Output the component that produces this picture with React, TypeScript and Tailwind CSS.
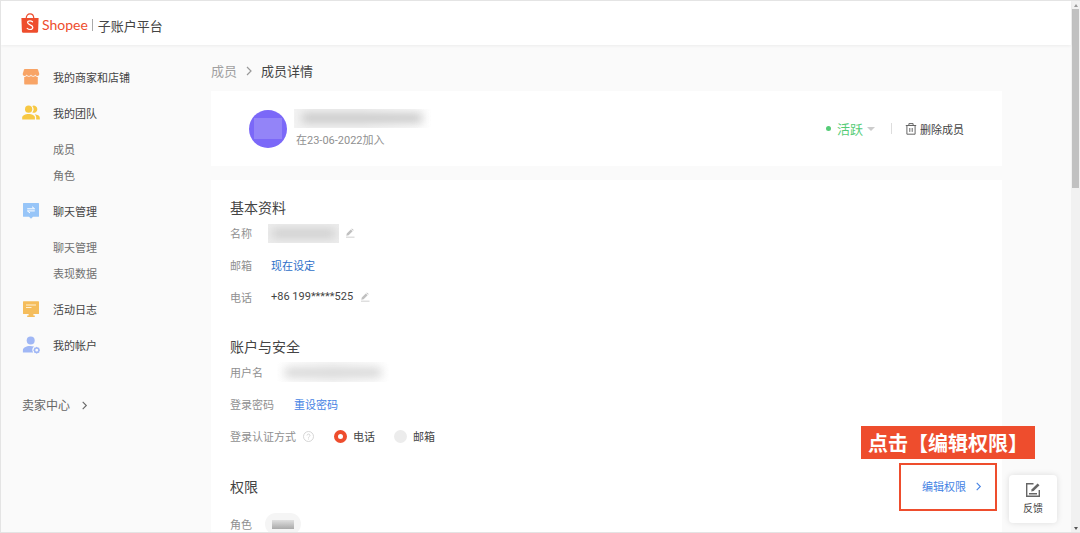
import type { ReactNode } from 'react';

function ShopeeBag() {
  return (
    <svg className="h-5 w-[18px]" viewBox="0 0 18 20" fill="none" aria-hidden="true">
      <path d="M5.2 5.6C5.2 2.6 6.8.9 9 .9s3.8 1.700 3.8 4.700" stroke="#ee4d2d" strokeWidth="1.200" />
      <path d="M.4 5h17.2l-.5 13.2c-.1 1-.8 1.600-1.700 1.600H2.600c-.9 0-1.600-.6-1.700-1.600L.4 5Z" fill="#ee4d2d" />
      <path
        d="M11.500 8.800c-.7-.6-1.600-1-2.500-1-1.400 0-2.400.7-2.400 1.800 0 2.600 5.200 1.900 5.200 4.700 0 1.300-1.200 2.200-2.700 2.200-1.200 0-2.200-.5-2.900-1.200"
        stroke="#fff"
        strokeWidth="1.200"
        strokeLinecap="round"
      />
    </svg>
  );
}

function StoreIcon() {
  return (
    <svg className="size-[18px]" viewBox="0 0 18 18" fill="#f8a466" aria-hidden="true">
      <path d="M2.800 1h12.400c.4 0 .7.200.8.600l1.300 4.500c0 1.200-.9 1.900-2 1.900s-2.100-.8-2.100-1.700c0 .9-1 1.700-2.100 1.700S9 7.200 9 6.300C9 7.200 8 8 6.900 8s-2.100-.8-2.100-1.700C4.800 7.200 3.800 8 2.700 8S.7 7.300.7 6.100L2 1.600c.1-.4.400-.6.800-.6Z" />
      <path d="M2.200 8.900c1.100.1 2-.2 2.600-.8 1.200 1 2.900 1 4.200 0 1.300 1 3 1 4.200 0 .6.600 1.500.9 2.600.8v6.700c0 .6-.4 1-1 1H3.200c-.6 0-1-.4-1-1V8.900Z" />
    </svg>
  );
}

function TeamIcon() {
  return (
    <svg className="size-[18px]" viewBox="0 0 18 18" fill="#f7c843" aria-hidden="true">
      <circle cx="6.600" cy="5.200" r="3.600" />
      <path d="M.2 15.600v-2c0-2.500 3.300-3.700 6.400-3.700s6.300 1.200 6.300 3.700v2H.2Z" />
      <path d="M10.300 1.900a3.600 3.600 0 1 1 0 6.600 5.200 5.200 0 0 0 0-6.600ZM12.700 10.200c2.600.3 5.100 1.400 5.100 3.500v1.900h-3.600v-2c0-1.400-.6-2.500-1.500-3.400Z" />
    </svg>
  );
}

function ChatIcon() {
  return (
    <svg className="size-[18px]" viewBox="0 0 18 18" aria-hidden="true">
      <path d="M1.600 1h14.800c.4 0 .6.2.6.6v12.600c0 .4-.2.600-.6.600H11l-2 1.900-2-1.900H1.600c-.4 0-.6-.2-.6-.6V1.600c0-.4.2-.6.6-.6Z" fill="#97c5f8" />
      <path d="M5.200 6.800h7.400L10 4.700M12.800 8.900H5.400L8 11" fill="none" stroke="#fff" strokeWidth="1" />
    </svg>
  );
}

function LogIcon() {
  return (
    <svg className="size-[18px]" viewBox="0 0 18 18" aria-hidden="true">
      <path d="M1.600 1.200h14.800c.4 0 .6.200.6.600v11.600c0 .4-.2.600-.6.600h-5v1.600h1.400V17H5.200v-1.400h1.400V14h-5c-.4 0-.6-.2-.6-.6V1.800c0-.4.200-.6.600-.6Z" fill="#f5bd5c" />
      <path d="M4 5h10M4 7.500h5.500" stroke="#fff1d5" strokeWidth="1" />
    </svg>
  );
}

function AccountIcon() {
  return (
    <svg className="size-[18px]" viewBox="0 0 18 18" fill="#a0b7f5" aria-hidden="true">
      <circle cx="8.700" cy="4.600" r="4" />
      <path d="M.9 16.500v-2.200c0-2.700 3.300-4.300 7.100-4.300 1.600 0 3 .2 4.100.6a4.500 4.500 0 0 0-1 5.900H.9Z" />
      <path
        fillRule="evenodd"
        d="m14.700 10.700 1.100.9 1.400.1.200 1.400.8 1.100-.8 1.100-.2 1.400-1.400.2-1.100.8-1.100-.8-1.400-.2-.2-1.400-.8-1.100.8-1.100.2-1.400 1.400-.1 1.100-.9Zm0 2.100a1.400 1.400 0 1 0 0 2.800 1.400 1.400 0 0 0 0-2.800Z"
      />
    </svg>
  );
}

function Chevron({ className }: { className: string }) {
  return (
    <svg className={className} viewBox="0 0 10 10" fill="none" stroke="currentColor" strokeWidth="1.200" aria-hidden="true">
      <path d="M3 1l4 4-4 4" />
    </svg>
  );
}

function EditButton({ label }: { label: string }) {
  return (
    <button type="button" aria-label={label} className="text-[#c0c0c0]">
      <svg className="size-[10px]" viewBox="0 0 10 10" fill="currentColor" aria-hidden="true">
        <path d="M1 8.700h8.500v.8H1ZM1.300 7.800l.5-2.200L5.800 1.500l1.800 1.700-4 4.100-2.300.5ZM6.300 1l.6-.6 1.800 1.700-.6.6Z" />
      </svg>
    </button>
  );
}

function MainItem({ icon, children }: { icon: ReactNode; children: ReactNode }) {
  return (
    <a href="#" className="flex h-9 items-center gap-[13px] text-[#444]">
      {icon}
      <span>{children}</span>
    </a>
  );
}

function SubItems({ items }: { items: string[] }) {
  return (
    <ul className="py-[5px] pl-[31px]">
      {items.map((item) => (
        <li key={item}>
          <a href="#" className="flex h-[26px] items-center text-[#707070]">
            {item}
          </a>
        </li>
      ))}
    </ul>
  );
}

function Row({ label, children }: { label: ReactNode; children: ReactNode }) {
  return (
    <div className="flex h-8 items-center">
      <div className="flex items-center text-[#909090]">{label}</div>
      {children}
    </div>
  );
}

function SectionTitle({ children }: { children: ReactNode }) {
  return <h2 className="text-[14px] leading-4 text-[#444]">{children}</h2>;
}

function AuthOption({ label, checked }: { label: string; checked?: boolean }) {
  return (
    <label className="flex items-center gap-[6px] text-[#444]">
      <input
        type="radio"
        name="auth"
        defaultChecked={checked}
        className="size-[13px] appearance-none rounded-full bg-[#ececec] checked:border-4 checked:border-[#ee4d2d] checked:bg-white"
      />
      {label}
    </label>
  );
}

export default function App() {
  return (
    <div className="flex h-screen overflow-hidden border-t border-b border-l border-[#e4e4e4] bg-[#fafafa] font-['Noto_Sans_CJK_SC',sans-serif] text-[11px] leading-4">
      <div className="relative flex min-w-0 flex-1 flex-col">
        <header className="flex h-11 shrink-0 items-center bg-white pl-5 shadow-[0_1px_3px_rgba(0,0,0,0.06)]">
          <ShopeeBag />
          <span className="ml-[3px] pt-1 font-['Lato',sans-serif] text-[14px] leading-5 text-[#ee4d2d]">Shopee</span>
          <span className="mx-1 mt-1 h-3 w-px bg-[#aaa]" />
          <h1 className="pt-[6px] pl-px text-[13px] leading-5 text-[#444]">子账户平台</h1>
        </header>

        <div className="flex min-h-0 flex-1">
          <nav className="w-[210px] shrink-0 pt-[14px] pl-[21px]">
            <MainItem icon={<StoreIcon />}>我的商家和店铺</MainItem>
            <MainItem icon={<TeamIcon />}>我的团队</MainItem>
            <SubItems items={['成员', '角色']} />
            <MainItem icon={<ChatIcon />}>聊天管理</MainItem>
            <SubItems items={['聊天管理', '表现数据']} />
            <MainItem icon={<LogIcon />}>活动日志</MainItem>
            <MainItem icon={<AccountIcon />}>我的帐户</MainItem>
            <a href="#" className="mt-8 flex items-center gap-[10px] text-[12px] leading-5 text-[#666]">
              卖家中心
              <Chevron className="size-[9px]" />
            </a>
          </nav>

          <main className="min-w-0 flex-1 pt-4 pr-[69px]">
            <div className="flex items-center gap-[7px] text-[13px] leading-5">
              <a href="#" className="text-[#a0a0a0]">成员</a>
              <Chevron className="size-[10px] text-[#999]" />
              <span className="text-[#444]">成员详情</span>
            </div>

            <section className="mt-[10px] flex h-[75px] items-center bg-white pr-[38px] pl-[38px]">
              <div className="flex size-[38px] items-center justify-center rounded-full bg-[#7b68f8]">
                <div className="h-[21px] w-7 bg-[#9384f8]" />
              </div>
              <div className="ml-[7px]">
                <div className="flex h-[19px] w-[137px] items-center overflow-hidden bg-linear-to-r from-[#f3f3f3] via-[#f3f3f3] to-white px-2">
                  <div className="h-[10px] w-[120px] bg-[#c8c8c8] blur-[5px]" />
                </div>
                <p className="mt-[3px] pl-[2px] text-[#909090]">
                  在<span className="font-['Roboto',sans-serif]">23-06-2022</span>加入
                </p>
              </div>
              <div className="ml-auto flex items-center">
                <span className="size-[5px] rounded-full bg-[#55cc77]" />
                <button type="button" className="ml-[6px] flex items-center gap-1 text-[13px] leading-5 text-[#55cc77]">
                  活跃
                  <span className="border-x-[4px] border-t-[4px] border-x-transparent border-t-[#ccc]" />
                </button>
                <span className="mr-[13px] ml-4 h-[11px] w-px bg-[#ddd]" />
                <button type="button" className="flex items-center gap-[3px] text-[#444]">
                  <svg className="size-3" viewBox="0 0 12 12" fill="none" stroke="#666" aria-hidden="true">
                    <path d="M.8 2.500h10.400M3.900 2.500V.6h4.200v1.900M1.900 2.500v8.700h8.200V2.500M4.800 5v3.900M7.200 5v3.900" />
                  </svg>
                  删除成员
                </button>
              </div>
            </section>

            <section className="mt-[14px] h-full bg-white px-[19px] pt-[19px]">
              <SectionTitle>基本资料</SectionTitle>
              <div className="pt-[2px]">
                <Row label="名称">
                  <div className="ml-4 flex h-[19px] w-[71px] items-center overflow-hidden bg-[#ededed] px-1">
                    <div className="h-[9px] w-full bg-[#cdcdcd] blur-[5px]" />
                  </div>
                  <div className="ml-[6px] flex">
                    <EditButton label="编辑名称" />
                  </div>
                </Row>
                <Row label="邮箱">
                  <a href="#" className="ml-[19px] text-[#2f70c8]">现在设定</a>
                </Row>
                <Row label="电话">
                  <span className="mr-[7px] ml-[19px] font-['Roboto',sans-serif] text-[#444]">+86 199*****525</span>
                  <EditButton label="编辑电话" />
                </Row>
              </div>

              <div className="mt-[25px]">
                <SectionTitle>账户与安全</SectionTitle>
                <div className="pt-[2px]">
                  <Row label="用户名">
                    <div className="ml-[14px] flex h-5 w-[112px] items-center overflow-hidden bg-linear-to-r from-white via-[#f6f6f6] to-white px-2">
                      <div className="h-[9px] w-full bg-[#d4d4d4] blur-[5px]" />
                    </div>
                  </Row>
                  <Row label="登录密码">
                    <a href="#" className="ml-5 text-[#4583e4]">重设密码</a>
                  </Row>
                  <Row
                    label={
                      <>
                        登录认证方式
                        <svg className="ml-[7px] size-[11px]" viewBox="0 0 11 11" fill="none" stroke="#ccc" strokeWidth=".8" aria-hidden="true">
                          <circle cx="5.500" cy="5.500" r="5" />
                          <path d="M4 4.500c0-1.900 3-1.900 3 0 0 1-1.500 1-1.500 2.200M5.500 7.500v1" />
                        </svg>
                      </>
                    }
                  >
                    <div className="ml-5 flex gap-[19px]">
                      <AuthOption label="电话" checked />
                      <AuthOption label="邮箱" />
                    </div>
                  </Row>
                </div>
              </div>

              <div className="mt-[26px]">
                <div className="flex items-center justify-between">
                  <SectionTitle>权限</SectionTitle>
                  <div className="relative">
                    <button type="button" className="flex items-center gap-2 text-[#4583e4]">
                      编辑权限
                      <Chevron className="size-[9px]" />
                    </button>
                    <div className="pointer-events-none absolute -top-[15px] -right-[14px] h-12 w-[98px] border-2 border-[#ee4d2d]" />
                    <div className="absolute -top-[52px] -right-[52px] flex h-[33px] w-[174px] items-center justify-center bg-[#ee4d2d] text-[20px] font-bold whitespace-nowrap text-white">
                      点击【编辑权限】
                    </div>
                  </div>
                </div>
                <div className="mt-[14px]">
                  <Row label="角色">
                    <div className="ml-[13px] flex h-[22px] w-9 items-center justify-center rounded-full bg-[#f5f5f5]">
                      <div className="h-[9px] w-[22px] bg-linear-to-b from-[#e0e0e0] to-[#aaa]" />
                    </div>
                  </Row>
                </div>
              </div>
            </section>
          </main>
        </div>

        <button
          type="button"
          className="absolute right-[14px] bottom-[9px] flex size-12 flex-col items-center justify-center gap-[2px] rounded-sm bg-white text-[10px] text-[#444] shadow-[0_0_6px_rgba(0,0,0,0.12)]"
        >
          <svg className="size-4" viewBox="0 0 16 16" fill="none" stroke="#666" strokeWidth="1.400" aria-hidden="true">
            <path d="M8.500 1.700H1.700v12.600h12.600V8M4 11.700h8" />
            <path d="M6.200 9.600l.5-2.300L12.600 1.400l1.900 1.900-5.900 5.800-2.400.5Z" fill="#666" stroke="none" />
          </svg>
          反馈
        </button>
      </div>

      <div className="flex w-[9px] shrink-0 flex-col items-center bg-[#f1f1f1]" aria-hidden="true">
        <div className="flex h-2 items-center">
          <span className="border-x-[2px] border-b-[3px] border-x-transparent border-b-[#999]" />
        </div>
        <div className="h-[179px] w-[7px] bg-[#c1c1c1]" />
        <div className="mt-auto flex h-2 items-center">
          <span className="border-x-[2px] border-t-[3px] border-x-transparent border-t-[#555]" />
        </div>
      </div>
    </div>
  );
}
